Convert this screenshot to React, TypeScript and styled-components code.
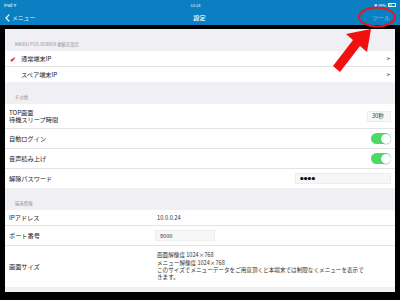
import React from 'react';
import styled, { createGlobalStyle } from 'styled-components';

const GlobalStyle = createGlobalStyle`
  html, body {
    margin: 0;
    padding: 0;
    width: 400px;
    height: 300px;
    overflow: hidden;
    background: #000;
    font-family: "Noto Sans CJK JP", "Noto Sans", sans-serif;
  }
`;

const Screen = styled.div`
  position: relative;
  width: 400px;
  height: 300px;
  display: flex;
  flex-direction: column;
  background: #000;
`;

const StatusBar = styled.div`
  height: 10px;
  background: #0a80c2;
  color: #fff;
  font-size: 4px;
  display: flex;
  align-items: center;
  justify-content: space-between;
  padding: 0 4px;
`;

const Battery = styled.span`
  display: flex;
  align-items: center;
  gap: 2px;
`;

const BatteryIcon = styled.span`
  width: 6px;
  height: 2.5px;
  border: 0.5px solid #dfe;
  border-radius: 0.5px;
  display: inline-flex;
  &::before {
    content: '';
    width: 45%;
    background: #4cd964;
  }
`;

const NavBar = styled.div`
  height: 15px;
  background: #0a80c2;
  color: #fff;
  display: grid;
  grid-template-columns: 1fr auto 1fr;
  align-items: center;
  padding: 0 6px 0 5px;
  font-size: 6.2px;
`;

const BackLink = styled.span`
  display: flex;
  align-items: center;
  gap: 2px;
  font-size: 5.8px;
  color: #e6f2fa;
`;

const NavTitle = styled.span`
  font-weight: 500;
`;

const NavAction = styled.span`
  justify-self: end;
  color: #8cc8ea;
  font-size: 6px;
  margin-right: 4px;
`;

const Frame = styled.div`
  flex: 1;
  border-top: 4px solid #000;
  border-left: 5px solid #000;
  border-right: 5px solid #000;
  border-bottom: 8px solid #000;
  background: #efeff4;
  display: flex;
  flex-direction: column;
  overflow: hidden;
`;

const SectionHeader = styled.div`
  height: 22px;
  box-sizing: border-box;
  padding: 0 0 4px 10px;
  display: flex;
  align-items: flex-end;
  font-size: 4.3px;
  color: #8e8e93;
  letter-spacing: 0.1px;
`;

const Group = styled.div`
  background: #fff;
`;

const Row = styled.div<{ $h: number; $indent?: number }>`
  height: ${p => p.$h}px;
  box-sizing: border-box;
  display: flex;
  align-items: center;
  padding: 0 4px 0 ${p => p.$indent ?? 4}px;
  font-size: 6.2px;
  color: #222;
  position: relative;
  & + & {
    border-top: 0.5px solid #e3e3e6;
  }
`;

const Check = styled.span`
  color: #e0201b;
  width: 11px;
  font-size: 7px;
  font-weight: 700;
`;

const Label = styled.span<{ $w?: number }>`
  flex: ${p => (p.$w ? `0 0 ${p.$w}px` : '1')};
  line-height: 7.5px;
`;

const Chevron = styled.span`
  margin-left: auto;
  color: #555;
  font-size: 5.5px;
  font-weight: 700;
  margin-right: 1px;
`;

const ValueBox = styled.span<{ $w: number }>`
  width: ${p => p.$w}px;
  height: 11px;
  box-sizing: border-box;
  background: #f7f7f7;
  border: 0.5px solid #ededed;
  display: flex;
  align-items: center;
  padding: 0 4px;
  font-size: 5.6px;
  color: #333;
`;

const Toggle = styled.span`
  width: 20px;
  height: 11px;
  border-radius: 6px;
  background: #4cd964;
  position: relative;
  &::after {
    content: '';
    position: absolute;
    right: 0.5px;
    top: 0.5px;
    width: 10px;
    height: 10px;
    border-radius: 50%;
    background: #fff;
    box-shadow: 0 0.5px 1px rgba(0, 0, 0, 0.3);
  }
`;

const Dots = styled.span`
  letter-spacing: 0.2px;
  font-size: 3.6px;
  color: #111;
`;

const Value = styled.span`
  font-size: 5.7px;
  color: #333;
`;

const InfoText = styled.div<{ $lh?: number }>`
  font-size: 5.6px;
  color: #333;
  line-height: ${p => p.$lh ?? 7.5}px;
  white-space: nowrap;
`;

const Spacer = styled.div`
  flex: 1;
`;

const Overlay = styled.svg`
  position: absolute;
  left: 0;
  top: 0;
  pointer-events: none;
`;

export default function App() {
  return (
    <Screen>
      <GlobalStyle />
      <StatusBar>
        <span>iPad ᯤ</span>
        <span>12:14</span>
        <Battery>
          ✱ 39% <BatteryIcon />
        </Battery>
      </StatusBar>
      <NavBar>
        <BackLink>
          <svg width="5" height="8" viewBox="0 0 5 8">
            <path d="M4.2 0.6 L1 4 L4.2 7.4" stroke="#fff" strokeWidth="1.2" fill="none" />
          </svg>
          メニュー
        </BackLink>
        <NavTitle>設定</NavTitle>
        <NavAction>ツール</NavAction>
      </NavBar>
      <Frame>
        <SectionHeader>MAIDO POS SERVER 接続先設定</SectionHeader>
        <Group>
          <Row $h={15} $indent={5}>
            <Check>✔</Check>
            <Label>通常端末IP</Label>
            <Chevron>&gt;</Chevron>
          </Row>
          <Row $h={16} $indent={16}>
            <Label>スペア端末IP</Label>
            <Chevron>&gt;</Chevron>
          </Row>
        </Group>
        <SectionHeader>その他</SectionHeader>
        <Group>
          <Row $h={24} $indent={4}>
            <Label>
              TOP画面
              <br />
              待機スリープ時間
            </Label>
            <ValueBox $w={24}>30秒</ValueBox>
          </Row>
          <Row $h={20}>
            <Label>自動ログイン</Label>
            <Toggle />
          </Row>
          <Row $h={20}>
            <Label>音声読み上げ</Label>
            <Toggle />
          </Row>
          <Row $h={20}>
            <Label>解除パスワード</Label>
            <ValueBox $w={96}>
              <Dots>●●●●</Dots>
            </ValueBox>
          </Row>
        </Group>
        <SectionHeader>端末情報</SectionHeader>
        <Group>
          <Row $h={15}>
            <Label $w={148}>IPアドレス</Label>
            <Value>10.0.0.24</Value>
          </Row>
          <Row $h={20}>
            <Label $w={146}>ポート番号</Label>
            <ValueBox $w={60}>8000</ValueBox>
          </Row>
          <Row $h={42}>
            <Label $w={148}>画面サイズ</Label>
            <div>
              <InfoText>画面解像度 1024×768</InfoText>
              <InfoText>メニュー解像度 1024×768</InfoText>
              <InfoText $lh={7}>
                このサイズでメニューデータをご用意頂くと本端末では制限なくメニューを表示で
                <br />
                きます。
              </InfoText>
            </div>
          </Row>
        </Group>
        <Spacer />
      </Frame>
      <Overlay width="400" height="300" viewBox="0 0 400 300">
        <ellipse cx="377" cy="17" rx="18" ry="9.5" fill="none" stroke="#e8141c" strokeWidth="2" />
        <path
          d="M371 29 L367 52 L360 46 L340 72 L333 66 L353 40 L346 34 Z"
          fill="#f01010"
        />
      </Overlay>
    </Screen>
  );
}
